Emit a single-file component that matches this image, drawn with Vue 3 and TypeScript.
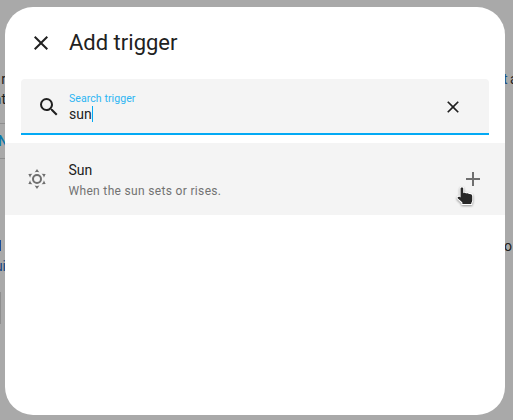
<script setup lang="ts">
import { ref } from 'vue'

interface Trigger {
  name: string
  description: string
}

const query = ref<string>('sun')
const triggers: Trigger[] = [{ name: 'Sun', description: 'When the sun sets or rises.' }]

const closePath =
  'M19,6.41L17.59,5L12,10.59L6.41,5L5,6.41L10.59,12L5,17.59L6.41,19L12,13.41L17.59,19L19,17.59L13.41,12L19,6.41Z'
const searchPath =
  'M9.5,3A6.5,6.5 0 0,1 16,9.5C16,11.11 15.41,12.59 14.44,13.73L14.71,14H15.5L20.5,19L19,20.5L14,15.5V14.71L13.73,14.44C12.59,15.41 11.11,16 9.5,16A6.5,6.5 0 0,1 3,9.5A6.5,6.5 0 0,1 9.5,3M9.5,5C7,5 5,7 5,9.5C5,12 7,14 9.5,14C12,14 14,12 14,9.5C14,7 12,5 9.5,5Z'
const sunPath =
  'M12,7A5,5 0 0,1 17,12A5,5 0 0,1 12,17A5,5 0 0,1 7,12A5,5 0 0,1 12,7M12,9A3,3 0 0,0 9,12A3,3 0 0,0 12,15A3,3 0 0,0 15,12A3,3 0 0,0 12,9M12,2L14.39,5.42C13.65,5.15 12.84,5 12,5C11.16,5 10.35,5.15 9.61,5.42L12,2M3.34,7L7.5,6.65C6.9,7.16 6.36,7.78 5.94,8.5C5.5,9.24 5.25,10 5.11,10.79L3.34,7M3.36,17L5.12,13.23C5.26,14 5.53,14.78 5.95,15.5C6.37,16.24 6.91,16.86 7.5,17.37L3.36,17M20.65,7L18.88,10.79C18.74,10 18.47,9.23 18.05,8.5C17.63,7.78 17.1,7.15 16.5,6.64L20.65,7M20.64,17L16.5,17.36C17.09,16.85 17.62,16.22 18.04,15.5C18.46,14.77 18.73,14 18.87,13.21L20.64,17M12,22L9.59,18.56C10.33,18.83 11.14,19 12,19C12.82,19 13.63,18.83 14.37,18.56L12,22Z'
const plusPath = 'M19,13H13V19H11V13H5V11H11V5H13V11H19V13Z'
</script>

<template>
  <div class="page">
    <div class="behind">
      <div class="strip left">
        <div class="line">r</div>
        <div class="line">at</div>
        <div class="tab">N</div>
        <div class="link"></div>
        <div class="line visited">ui</div>
        <div class="edge"></div>
      </div>
      <div class="strip right">
        <div class="line"><span class="blue">t</span> a</div>
        <div class="line low">o</div>
      </div>
    </div>

    <section class="dialog">
      <header class="header">
        <svg class="icon" viewBox="0 0 24 24"><path :d="closePath" /></svg>
        <h2 class="title">Add trigger</h2>
      </header>

      <div class="search">
        <svg class="icon" viewBox="0 0 24 24"><path :d="searchPath" /></svg>
        <div class="field">
          <span class="label">Search trigger</span>
          <span class="value">{{ query }}<i class="caret"></i></span>
        </div>
        <svg class="clear" viewBox="0 0 24 24"><path :d="closePath" /></svg>
      </div>

      <div v-for="t in triggers" :key="t.name" class="item">
        <svg class="sun" viewBox="0 0 24 24"><path :d="sunPath" /></svg>
        <div class="text">
          <span class="name">{{ t.name }}</span>
          <span class="description">{{ t.description }}</span>
        </div>
        <svg class="plus" viewBox="0 0 24 24"><path :d="plusPath" /></svg>
      </div>
    </section>

    <svg class="pointer" viewBox="0 0 20 22">
      <path
        d="M3.6 2.6C3.6 1.2 6.2 1.2 6.2 2.6V7.2C7.2 6.6 8.6 6.8 9.1 7.6C10.1 7 11.4 7.2 11.9 8.1C13.4 7.6 15.2 8.3 15.2 10.1V14.4C15.2 15.4 14.6 16.2 14.2 17V18H5.4V16.6C4.2 15.4 2.4 14 .9 12.6C0 11.4 1.4 10.2 2.6 10.8L3.6 11.4Z"
      />
    </svg>
  </div>
</template>

<style>
body {
  overflow: hidden;
}
</style>

<style scoped>
.page {
  position: relative;
  width: 513px;
  height: 420px;
  overflow: hidden;
  background: #a9a9a9;
  font-family: Roboto, sans-serif;
  color: #212121;
}

.behind {
  display: flex;
  justify-content: space-between;
}

.strip {
  box-sizing: border-box;
  height: 420px;
  overflow: hidden;
  padding-top: 69px;
  font-size: 14px;
  line-height: 20px;
  white-space: nowrap;
}

.left {
  width: 8px;
}

.right {
  width: 10px;
}

.left .line {
  display: flex;
  justify-content: flex-end;
  width: 6px;
}

.tab {
  display: flex;
  justify-content: flex-end;
  box-sizing: border-box;
  width: 8px;
  height: 36px;
  margin-top: 14px;
  border-top: 1px solid #8e8e8e;
  border-bottom: 1px solid #8e8e8e;
  color: #0878ac;
  font-weight: 500;
  line-height: 34px;
}

.link {
  width: 1px;
  height: 11px;
  margin: 81px 0 5px;
  background: #174d99;
}

.left .visited {
  color: #154580;
}

.edge {
  width: 1px;
  height: 32px;
  margin-top: 16px;
  background: #8e8e8e;
}

.blue {
  color: #154f88;
}

.right .line {
  word-spacing: -1px;
}

.right .low {
  margin-top: 147px;
  padding-left: 1px;
}

.dialog {
  position: absolute;
  top: 7px;
  left: 5px;
  width: 500px;
  height: 408px;
  overflow: hidden;
  border-radius: 28px;
  background: #fff;
}

.header {
  display: flex;
  align-items: center;
  gap: 16px;
  height: 72px;
  padding-left: 24px;
}

.title {
  margin: 0;
  font-size: 22px;
  font-weight: 400;
  line-height: 28px;
}

svg {
  display: block;
  flex: none;
  fill: #212121;
}

.icon {
  width: 24px;
  height: 24px;
}

.search {
  display: flex;
  align-items: center;
  box-sizing: border-box;
  height: 56px;
  margin: 0 16px 8px;
  padding: 2px 26px 0 16px;
  border-bottom: 2px solid #03a9f4;
  border-radius: 4px 4px 0 0;
  background: #f4f4f4;
}

.field {
  display: flex;
  flex: 1;
  flex-direction: column;
  margin-left: 8px;
}

.label {
  color: #2cb4f3;
  font-size: 10.5px;
  line-height: 13px;
  letter-spacing: 0.08px;
}

.value {
  display: flex;
  align-items: center;
  height: 18px;
  font-size: 14px;
}

.caret {
  width: 1px;
  height: 16px;
  background: #03a9f4;
}

.clear {
  width: 20px;
  height: 20px;
}

.item {
  display: flex;
  align-items: center;
  height: 72px;
  padding: 0 20px;
  background: #f4f4f4;
}

.item svg {
  fill: #6f6f6f;
}

.sun {
  width: 24px;
  height: 24px;
}

.text {
  display: flex;
  flex: 1;
  flex-direction: column;
  margin-left: 19.5px;
  padding-top: 2px;
}

.name {
  font-size: 14px;
  line-height: 22px;
}

.description {
  color: #727272;
  font-size: 12px;
  line-height: 20px;
  letter-spacing: 0.33px;
}

.plus {
  width: 24px;
  height: 24px;
}

.pointer {
  position: absolute;
  top: 186px;
  left: 457px;
  width: 20px;
  height: 22px;
  overflow: visible;
  fill: #282828;
  stroke: #fff;
  stroke-width: 2;
  paint-order: stroke;
  filter: drop-shadow(0 1px 1px rgba(0, 0, 0, 0.4));
}
</style>
